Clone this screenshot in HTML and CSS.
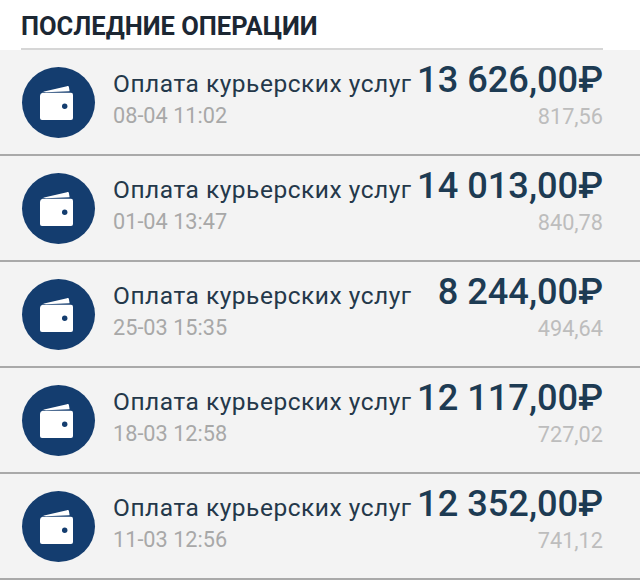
FILE: index.html
```html
<!DOCTYPE html>
<html>
<head>
    <meta charset="utf-8">
    <title>Последние операции</title>
    <link rel="stylesheet" href="styles.css">
</head>
<body>
<svg class="sprite" width="0" height="0">
    <symbol id="wallet" viewBox="0 0 33 34">
        <path d="M3 5.800 27 .2c1.100-.3 1.800.2 2 1.300l.6 3.700-23.600 1z" fill="#fff"/>
        <path d="M2.500 6.800H31a2 2 0 0 1 2 2V32a2 2 0 0 1-2 2H2a2 2 0 0 1-2-2V9.800a3.500 3.500 0 0 1 2.500-3z" fill="#fff"/>
        <circle cx="24.700" cy="20.300" r="2.700" fill="#143d6f"/>
    </symbol>
</svg>
<div class="page-title"><h1>ПОСЛЕДНИЕ ОПЕРАЦИИ</h1></div>
<div class="operations">
    <div class="operation">
        <div class="icon"><svg width="33" height="34"><use href="#wallet"/></svg></div>
        <div class="details">
            <div class="name">Оплата курьерских услуг</div>
            <div class="date">08-04 11:02</div>
        </div>
        <div class="sums">
            <div class="amount">13 626,00₽</div>
            <div class="bonus">817,56</div>
        </div>
    </div>
    <div class="operation">
        <div class="icon"><svg width="33" height="34"><use href="#wallet"/></svg></div>
        <div class="details">
            <div class="name">Оплата курьерских услуг</div>
            <div class="date">01-04 13:47</div>
        </div>
        <div class="sums">
            <div class="amount">14 013,00₽</div>
            <div class="bonus">840,78</div>
        </div>
    </div>
    <div class="operation">
        <div class="icon"><svg width="33" height="34"><use href="#wallet"/></svg></div>
        <div class="details">
            <div class="name">Оплата курьерских услуг</div>
            <div class="date">25-03 15:35</div>
        </div>
        <div class="sums">
            <div class="amount">8 244,00₽</div>
            <div class="bonus">494,64</div>
        </div>
    </div>
    <div class="operation">
        <div class="icon"><svg width="33" height="34"><use href="#wallet"/></svg></div>
        <div class="details">
            <div class="name">Оплата курьерских услуг</div>
            <div class="date">18-03 12:58</div>
        </div>
        <div class="sums">
            <div class="amount">12 117,00₽</div>
            <div class="bonus">727,02</div>
        </div>
    </div>
    <div class="operation">
        <div class="icon"><svg width="33" height="34"><use href="#wallet"/></svg></div>
        <div class="details">
            <div class="name">Оплата курьерских услуг</div>
            <div class="date">11-03 12:56</div>
        </div>
        <div class="sums">
            <div class="amount">12 352,00₽</div>
            <div class="bonus">741,12</div>
        </div>
    </div>
</div>
</body>
</html>
```

FILE: styles.css
```css
html, body {
    margin: 0;
    background-color: #ffffff;
    font-family: Roboto, "Noto Sans", sans-serif;
    overflow: hidden;
}
.sprite {
    position: absolute;
}
.page-title {
    height: 50px;
    padding: 0 37px 0 21px;
    box-sizing: border-box;
}
.page-title h1 {
    margin: 0;
    height: 50px;
    box-sizing: border-box;
    padding-top: 12px;
    font-size: 25.5px;
    line-height: 29px;
    font-weight: 700;
    color: #1c2733;
    border-bottom: 2px solid #d6d6d6;
}
.operation {
    height: 106px;
    box-sizing: border-box;
    display: flex;
    padding: 17px 37px 0 22px;
    background-color: #f3f3f3;
    border-bottom: 2px solid #a9a9a9;
}
.icon {
    width: 73px;
    height: 71px;
    flex: none;
    box-sizing: border-box;
    padding-right: 4px;
    display: flex;
    align-items: center;
    justify-content: center;
    border-radius: 50%;
    background-color: #143d6f;
}
.details {
    flex: 1;
    margin-left: 18px;
    padding-top: 3px;
    white-space: nowrap;
}
.name {
    font-size: 24.5px;
    line-height: 28px;
    letter-spacing: 0.52px;
    color: #24384a;
}
.date {
    margin-top: 6px;
    font-size: 21.7px;
    line-height: 24px;
    color: #a8a8a8;
}
.sums {
    text-align: right;
    white-space: nowrap;
}
.amount {
    margin-top: -7px;
    font-size: 36.2px;
    line-height: 40px;
    font-weight: 500;
    color: #1d3b53;
}
.bonus {
    margin-top: 5px;
    font-size: 21.7px;
    line-height: 24px;
    color: #bdbdbd;
}
```
